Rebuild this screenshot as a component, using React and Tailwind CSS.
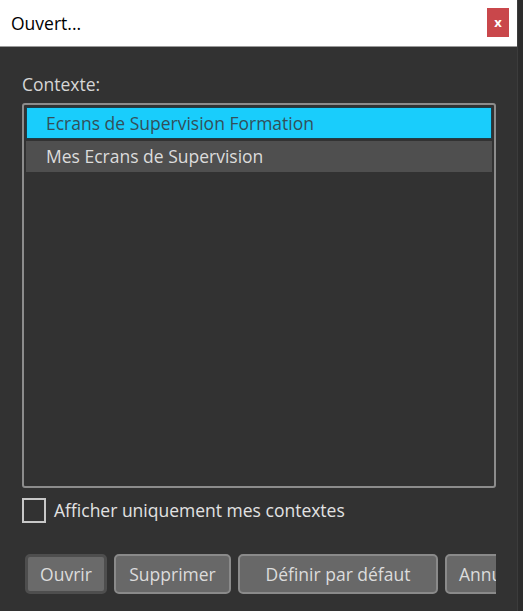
export default function App() {
  const font = { fontFamily: '"Open Sans", "Noto Sans", sans-serif' };
  return (
    <div className="w-[523px] h-[611px] bg-[#2c2c2c] flex overflow-hidden" style={font}>
      <div className="w-[518px] h-full bg-[#323232] flex flex-col border-r border-[#3c3c3c]">
        <div className="h-[47px] bg-white border-b border-[#9a9a9a] flex items-center justify-between pl-[11px] pr-[8px]">
          <span className="text-[17.5px] text-black">Ouvert...</span>
          <div className="w-[22px] h-[29px] bg-[#c9474b] flex items-center justify-center text-white text-[13px] font-bold leading-none mb-[2px]">x</div>
        </div>
        <div className="flex flex-col pl-[22px] pr-[21px]">
          <div className="mt-[26px] h-[22px] text-[17.5px] text-[#d6d6d6] leading-[22px]">Contexte:</div>
          <div className="mt-[8px] h-[385px] border-2 border-[#8c8c8c] rounded-[3px] p-[2px] flex flex-col gap-[2px]">
            <div className="h-[32px] bg-[#19cdfc] border border-[#1d3e48] pl-[19px] flex items-center text-[17.5px] text-[#33505a]">
              Ecrans de Supervision Formation
            </div>
            <div className="h-[31px] bg-[#4f4f4f] pl-[20px] flex items-center text-[17.5px] text-[#dcdcdc]">
              Mes Ecrans de Supervision
            </div>
          </div>
          <div className="mt-[9px] flex items-center gap-[8px]">
            <div className="w-[24px] h-[25px] border-2 border-[#c8c8c8]"></div>
            <span className="text-[17.5px] text-[#e2e2e2]">Afficher uniquement mes contextes</span>
          </div>
          <div className="mt-[31px] flex gap-[7px] overflow-hidden">
            <button className="shrink-0 w-[82px] h-[40px] rounded-[5px] border-[3px] border-[#4e4e4e] bg-[#6a6a6a] text-[17.5px] text-[#dcdcdc] ml-[3px]">Ouvrir</button>
            <button className="shrink-0 w-[117px] h-[40px] rounded-[5px] border-2 border-[#8a8a8a] bg-[#686868] text-[17.5px] text-[#dcdcdc]">Supprimer</button>
            <button className="shrink-0 w-[200px] h-[40px] rounded-[5px] border-2 border-[#8a8a8a] bg-[#686868] text-[17.5px] text-[#dcdcdc]">Définir par défaut</button>
            <button className="shrink-0 w-[90px] h-[40px] rounded-[5px] border-2 border-[#8a8a8a] bg-[#686868] text-[17.5px] text-[#dcdcdc] text-left pl-[12px]">Annuler</button>
          </div>
        </div>
      </div>
    </div>
  );
}
